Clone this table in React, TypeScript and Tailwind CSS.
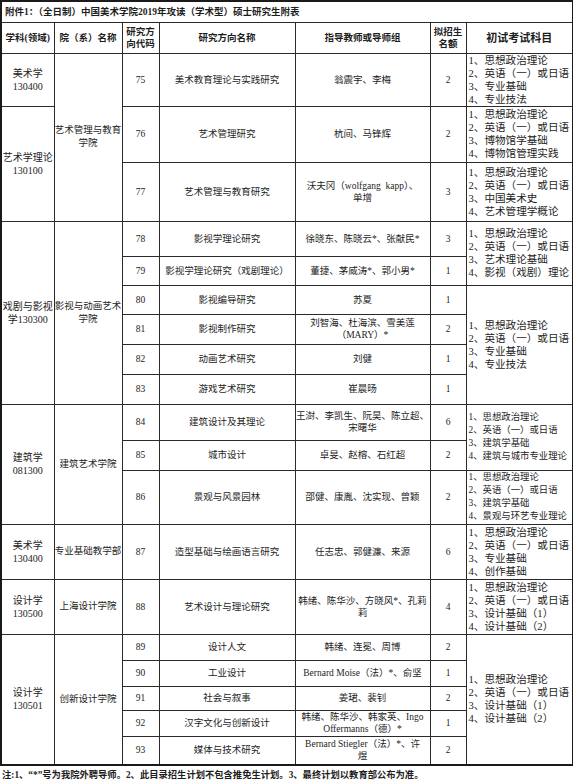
import React from "react";

type Row = {
  code: string;
  name: string;
  teacher: string[];
  n: string;
};

const rows: Row[] = [
  { code: "75", name: "美术教育理论与实践研究", teacher: ["翁震宇、李梅"], n: "2" },
  { code: "76", name: "艺术管理研究", teacher: ["杭间、马锋辉"], n: "2" },
  { code: "77", name: "艺术管理与教育研究", teacher: ["沃夫冈（wolfgang\u00a0\u00a0kapp）、", "单增"], n: "3" },
  { code: "78", name: "影视学理论研究", teacher: ["徐晓东、陈晓云*、张献民*"], n: "3" },
  { code: "79", name: "影视学理论研究（戏剧理论）", teacher: ["董捷、茅威涛*、郭小男*"], n: "1" },
  { code: "80", name: "影视编导研究", teacher: ["苏夏"], n: "1" },
  { code: "81", name: "影视制作研究", teacher: ["刘智海、杜海滨、雪美莲", "（MARY）*"], n: "2" },
  { code: "82", name: "动画艺术研究", teacher: ["刘健"], n: "1" },
  { code: "83", name: "游戏艺术研究", teacher: ["崔晨旸"], n: "1" },
  { code: "84", name: "建筑设计及其理论", teacher: ["王澍、李凯生、阮昊、陈立超、", "宋曙华"], n: "6" },
  { code: "85", name: "城市设计", teacher: ["卓旻、赵榕、石红超"], n: "2" },
  { code: "86", name: "景观与风景园林", teacher: ["邵健、康胤、沈实现、曾颖"], n: "2" },
  { code: "87", name: "造型基础与绘画语言研究", teacher: ["任志忠、郭健濂、来源"], n: "6" },
  { code: "88", name: "艺术设计与理论研究", teacher: ["韩绪、陈华沙、方晓风*、孔莉", "莉"], n: "4" },
  { code: "89", name: "设计人文", teacher: ["韩绪、连冕、周博"], n: "2" },
  { code: "90", name: "工业设计", teacher: ["Bernard Moise（法）*、俞坚"], n: "1" },
  { code: "91", name: "社会与叙事", teacher: ["姜珺、裴钊"], n: "2" },
  { code: "92", name: "汉字文化与创新设计", teacher: ["韩绪、陈华沙、韩家英、Ingo", "Offermanns（德）*"], n: "1" },
  { code: "93", name: "媒体与技术研究", teacher: ["Bernard Stiegler（法）*、许", "煜"], n: "2" },
];

// row heights in px, same order as rows
const heights = [
  "h-[52px]", "h-[56px]", "h-[59px]", "h-[35px]", "h-[29px]", "h-[29px]", "h-[30px]",
  "h-[30px]", "h-[30px]", "h-[36px]", "h-[30px]", "h-[54px]", "h-[55px]", "h-[55px]",
  "h-[26px]", "h-[26px]", "h-[24px]", "h-[26px]", "h-[29px]",
];

const disc: Record<string, [number, string, string]> = {
  "75": [1, "美术学", "130400"],
  "76": [2, "艺术学理论", "130100"],
  "78": [6, "戏剧与影视", "学130300"],
  "84": [3, "建筑学", "081300"],
  "87": [1, "美术学", "130400"],
  "88": [1, "设计学", "130500"],
  "89": [5, "设计学", "130501"],
};

const dept: Record<string, [number, string[]]> = {
  "75": [3, ["艺术管理与教育", "学院"]],
  "78": [6, ["影视与动画艺术", "学院"]],
  "84": [3, ["建筑艺术学院"]],
  "87": [1, ["专业基础教学部"]],
  "88": [1, ["上海设计学院"]],
  "89": [5, ["创新设计学院"]],
};

const base = ["思想政治理论", "英语（一）或日语"];
const subjects: Record<string, [number, string[], boolean]> = {
  "75": [1, [...base, "专业基础", "专业技法"], false],
  "76": [1, [...base, "博物馆学基础", "博物馆管理实践"], false],
  "77": [1, [...base, "中国美术史", "艺术管理学概论"], false],
  "78": [2, [...base, "艺术理论基础", "影视（戏剧）理论"], false],
  "80": [4, [...base, "专业基础", "专业技法"], false],
  "84": [2, [...base, "建筑学基础", "建筑与城市专业理论"], true],
  "86": [1, [...base, "建筑学基础", "景观与环艺专业理论"], true],
  "87": [1, [...base, "专业基础", "创作基础"], false],
  "88": [1, [...base, "设计基础（1）", "设计基础（2）"], false],
  "89": [5, [...base, "设计基础（1）", "设计基础（2）"], false],
};

const cell = "border border-[#2a2a2a] p-0 text-center align-middle";

export default function App() {
  return (
    <div className="w-[573px] min-h-[782px] bg-white text-[#1d1d1d] font-['Liberation_Serif','Noto_Sans_CJK_SC',serif]">
      <table className="table-fixed border-collapse w-[572px] border-2 border-[#1a1a1a]">
        <colgroup>
          <col className="w-[53px]" />
          <col className="w-[68px]" />
          <col className="w-[37px]" />
          <col className="w-[136px]" />
          <col className="w-[135px]" />
          <col className="w-[36px]" />
          <col className="w-[107px]" />
        </colgroup>
        <tbody>
          <tr className="h-[21px]">
            <td colSpan={7} className={`${cell} text-left pl-[3px] text-[9.5px] font-bold`}>
              附件1：（全日制）中国美术学院2019年攻读（学术型）硕士研究生附表
            </td>
          </tr>
          <tr className="h-[31px] font-bold text-[9.5px] leading-[12px]">
            <td className={cell}>学科(领域)</td>
            <td className={cell}>院（系）名称</td>
            <td className={cell}>
              研究方
              <br />
              向代码
            </td>
            <td className={cell}>研究方向名称</td>
            <td className={cell}>指导教师或导师组</td>
            <td className={cell}>
              拟招生
              <br />
              名额
            </td>
            <td className={`${cell} text-[11px]`}>初试考试科目</td>
          </tr>
          {rows.map((r, i) => {
            const d = disc[r.code];
            const p = dept[r.code];
            const s = subjects[r.code];
            return (
              <tr key={r.code} className={`${heights[i]} text-[9.5px] leading-[12px]`}>
                {d && (
                  <td rowSpan={d[0]} className={`${cell} text-[10px] leading-[13px]`}>
                    {d[1]}
                    <br />
                    {d[2]}
                  </td>
                )}
                {p && (
                  <td rowSpan={p[0]} className={`${cell} text-[9.5px] leading-[13px]`}>
                    {p[1].map((t) => (
                      <div key={t}>{t}</div>
                    ))}
                  </td>
                )}
                <td className={cell}>{r.code}</td>
                <td className={cell}>{r.name}</td>
                <td className={cell}>
                  {r.teacher.map((t) => (
                    <div key={t} className="whitespace-nowrap">
                      {t}
                    </div>
                  ))}
                </td>
                <td className={cell}>{r.n}</td>
                {s && (
                  <td
                    rowSpan={s[0]}
                    className={`${cell} text-left pl-[2px] whitespace-nowrap ${
                      s[2] ? "text-[9.4px] leading-[13px]" : "text-[10.6px] leading-[13px]"
                    }`}
                  >
                    {s[1].map((t, k) => (
                      <div key={t}>
                        {k + 1}、{t}
                      </div>
                    ))}
                  </td>
                )}
              </tr>
            );
          })}
        </tbody>
      </table>
      <p className="mt-[4px] pl-[2px] text-[9.3px] font-bold leading-[11px]">
        注:1、“*”号为我院外聘导师。2、此目录招生计划不包含推免生计划。3、最终计划以教育部公布为准。
      </p>
    </div>
  );
}
